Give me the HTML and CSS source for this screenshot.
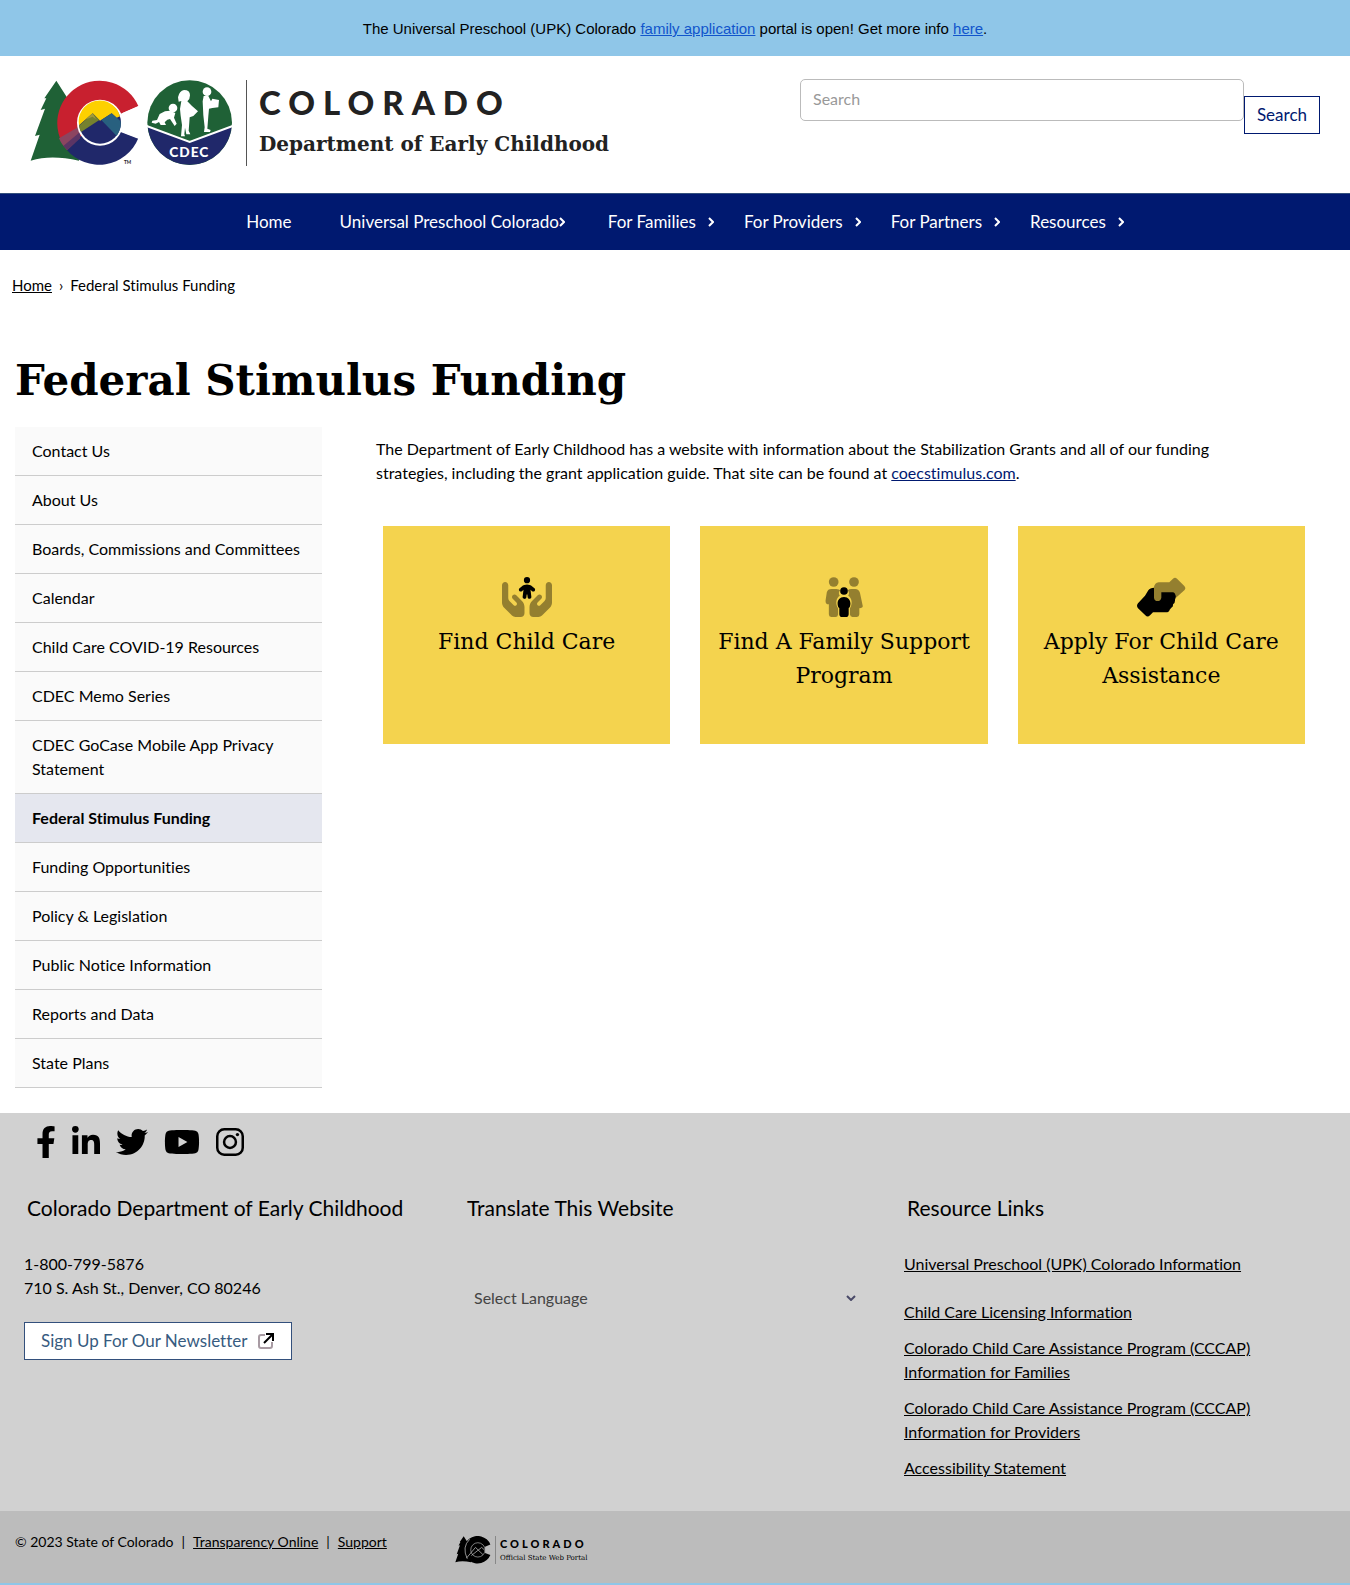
FILE: index.html
```html
<!DOCTYPE html>
<html lang="en">
<head>
<meta charset="utf-8">
<meta name="viewport" content="width=device-width, initial-scale=1">
<title>Federal Stimulus Funding | Colorado Department of Early Childhood</title>
<link rel="stylesheet" href="styles.css">
</head>
<body>
<div class="alert">The Universal Preschool (UPK) Colorado <a href="#">family application</a> portal is open! Get more info <a href="#">here</a>.</div>

<header class="header">
  <a class="brand" href="#">
    <svg class="brand-mark" viewBox="90 60 612 258" aria-hidden="true">
      <path fill="#1f6136" d="M169 62L133 115l6 0-17 35 13-4-30 82 14-4-27 78c45-14 90-12 145 0L230 170 206 120z"/>
      <path fill="#c8202f" d="M415 138A127 127 0 1 0 200 269L300 190 366 160z"/>
      <path fill="#20286a" d="M415 235A127 127 0 0 1 200 269L240 230 300 190 366 216z"/>
      <path fill="#8c4560" d="M177 235L240 198V234L202 270Q184 254 177 235z"/>
      <path fill="#5b3565" d="M190 258L240 216V234L202 270z"/>
      <path fill="#fff" d="M366 160L440 128V246L362 216z"/>
      <circle cx="300" cy="188" r="69" fill="#fff"/>
      <circle cx="300" cy="188" r="63" fill="#20286a"/>
      <path fill="#fdd000" d="M237 196A63 63 0 0 1 360 169L350 173 335 160 300 182 278 160z"/>
      <path fill="#75812f" d="M237 197L278 160 298 180 243 216Q238 206 237 197z"/>
      <path fill="#a49a3a" d="M278 160L258 178 278 170 288 178z"/>
      <path fill="#28607f" d="M304 180L335 160 362 184Q365 205 350 228z"/>
      <text x="372" y="312" class="tm">TM</text>
      <circle cx="569" cy="188" r="127" fill="#1f6136"/>
      <path fill="#20286a" d="M443 199L569 245 695 199A126.500 126.500 0 0 1 443 199z"/>
      <path fill="none" stroke="#fff" stroke-width="6" d="M440 198L569 246 698 198"/>
      <g fill="#fff">
        <circle cx="519" cy="144" r="13"/>
        <path d="M510 152l16 7-4 14 8 18-6 7-14-21-8 2-8 8 4 8h-16l-5-9-10 5-12-3 2-6 14-2 8-18 16-8z"/>
        <path d="M534 112q4-20 18-22 18 0 18 16 0 12-8 18l14 14 18 16-14 14-11 4-1 14-2 26 5 11h-12l-4-20-2 20 2 6h-12l3-34-4-28-2-20 4-24-8 2z"/>
        <circle cx="621" cy="95" r="13"/>
        <path d="M611 108h14l8 16 4-8 20 4-2 22-18 2-10 2-2 22-3 38 10 4-2 6h-18l2-14-4-36-2-42z"/>
      </g>
      <text x="508" y="290" class="cdec">CDEC</text>
    </svg>
    <span class="brand-text">
      <span class="brand-state">COLORADO</span>
      <span class="brand-dept">Department of Early Childhood</span>
    </span>
  </a>
  <form class="search">
    <input class="search-input" type="search" placeholder="Search" aria-label="Search">
    <button class="search-button" type="submit">Search</button>
  </form>
</header>

<nav class="nav" aria-label="Main">
  <ul class="nav-list">
    <li><a href="#">Home</a></li>
    <li class="nav-tight"><a href="#">Universal Preschool Colorado<svg class="chev" viewBox="0 0 6 10"><path d="M1 1l4 4-4 4"/></svg></a></li>
    <li><a href="#">For Families<svg class="chev" viewBox="0 0 6 10"><path d="M1 1l4 4-4 4"/></svg></a></li>
    <li><a href="#">For Providers<svg class="chev" viewBox="0 0 6 10"><path d="M1 1l4 4-4 4"/></svg></a></li>
    <li><a href="#">For Partners<svg class="chev" viewBox="0 0 6 10"><path d="M1 1l4 4-4 4"/></svg></a></li>
    <li><a href="#">Resources<svg class="chev" viewBox="0 0 6 10"><path d="M1 1l4 4-4 4"/></svg></a></li>
  </ul>
</nav>

<main class="main">
  <div class="breadcrumb"><a href="#">Home</a><span>›</span><span>Federal Stimulus Funding</span></div>
  <h1 class="title">Federal Stimulus Funding</h1>
  <div class="columns">
    <ul class="side">
      <li><a href="#">Contact Us</a></li>
      <li><a href="#">About Us</a></li>
      <li><a href="#">Boards, Commissions and Committees</a></li>
      <li><a href="#">Calendar</a></li>
      <li><a href="#">Child Care COVID-19 Resources</a></li>
      <li><a href="#">CDEC Memo Series</a></li>
      <li><a href="#">CDEC GoCase Mobile App Privacy Statement</a></li>
      <li><a class="current" href="#">Federal Stimulus Funding</a></li>
      <li><a href="#">Funding Opportunities</a></li>
      <li><a href="#">Policy &amp; Legislation</a></li>
      <li><a href="#">Public Notice Information</a></li>
      <li><a href="#">Reports and Data</a></li>
      <li><a href="#">State Plans</a></li>
    </ul>
    <div class="content">
      <p class="intro">The Department of Early Childhood has a website with information about the Stabilization Grants and all of our funding strategies, including the grant application guide. That site can be found at <a href="#">coecstimulus.com</a>.</p>
      <div class="cards">
        <a class="card" href="#">
          <svg class="card-icon" viewBox="0 0 640 512"><path d="M320 0a40 40 0 1 1 0 80 40 40 0 1 1 0-80zm44.700 164.300L375.800 253c1.600 13.200-7.700 25.100-20.800 26.800s-25.100-7.700-26.800-20.800l-4.400-35h-7.600l-4.400 35c-1.600 13.200-13.600 22.500-26.800 20.800s-22.500-13.600-20.800-26.800l11.100-88.800L255.500 181c-10.100 8.600-25.300 7.300-33.800-2.800s-7.300-25.300 2.800-33.800l27.900-23.600C271.300 104.800 295.300 96 320 96s48.700 8.800 67.600 24.700l27.900 23.600c10.100 8.600 11.400 23.700 2.800 33.800s-23.700 11.400-33.800 2.800l-19.800-16.700z"/><path class="soft" d="M40 64c22.100 0 40 17.900 40 40v160.200c0 17 6.700 33.300 18.700 45.300l51.100 51.100c8.300 8.300 21.300 9.600 31 3.100 12.900-8.600 14.700-26.900 3.700-37.800l-47.200-47.200c-12.500-12.500-12.500-32.800 0-45.300s32.800-12.500 45.300 0l72.500 72.500c21 21 32.800 49.500 32.800 79.200V464c0 26.500-21.500 48-48 48h-66.700c-17 0-33.300-6.700-45.300-18.700L28.100 393.400C10.100 375.400 0 351 0 325.500V104c0-22.100 17.900-40 40-40zm560 0c22.100 0 40 17.900 40 40v221.500c0 25.500-10.100 49.900-28.100 67.900L512 493.300c-12 12-28.300 18.700-45.300 18.700H400c-26.500 0-48-21.500-48-48v-78.900c0-29.700 11.800-58.200 32.800-79.200l72.500-72.500c12.500-12.500 32.800-12.500 45.300 0s12.500 32.800 0 45.300l-47.200 47.200c-11 11-9.200 29.200 3.700 37.800 9.700 6.500 22.700 5.200 31-3.100l51.100-51.100c12-12 18.700-28.300 18.700-45.300V104c0-22.100 17.900-40 40-40z"/></svg>
          <span>Find Child Care</span>
        </a>
        <a class="card" href="#">
          <svg class="card-icon" viewBox="-64 0 640 512"><g class="soft"><circle cx="124" cy="64" r="62"/><circle cx="384" cy="64" r="62"/><path d="M96 152H160Q196 154 208 170 176 200 202 240C150 270 146 350 180 400V480Q176 512 148 512H92Q62 508 62 476V350Q16 350 20 300L36 196Q46 152 96 152z"/><path d="M352 152H400Q446 154 460 200L496 372Q498 398 452 400V476Q450 508 420 512H364Q336 508 332 480V400C366 350 362 270 310 240 336 200 306 180 304 170Q320 152 352 152z"/></g><circle cx="256" cy="179" r="49"/><path d="M256 256C310 256 338 296 338 340 338 370 330 390 316 398V476Q312 512 284 512H228Q200 512 196 476V398C182 390 174 370 174 340 174 296 202 256 256 256z"/></svg>
          <span>Find A Family Support Program</span>
        </a>
        <a class="card" href="#">
          <svg class="card-icon" viewBox="828 170 150 120"><path d="M882 202Q870 202 865 210L855 226 834 249Q828 256 834 264L856 285Q863 292 870 285L879 276H918Q927 276 929 268L934 262Q940 260 939 252 946 248 945 238L949 226 945 212H900z"/><path class="soft" d="M882 232V200Q884 188 896 186H928L939 175Q945 169 951 175L973 197Q979 204 973 210L948 232Q946 216 938 216H904V232Q902 242 893 242 883 242 882 232z"/></svg>
          <span>Apply For Child Care Assistance</span>
        </a>
      </div>
    </div>
  </div>
</main>

<footer class="footer">
  <div class="social">
    <a href="#" aria-label="Facebook"><svg viewBox="0 0 320 512"><path d="M279.140 288l14.220-92.660h-88.910v-60.130c0-25.350 12.420-50.060 52.240-50.060h40.420V6.260S260.430 0 225.360 0c-73.220 0-121.080 44.380-121.080 124.720v70.620H22.890V288h81.390v224h100.170V288z"/></svg></a>
    <a href="#" aria-label="LinkedIn"><svg viewBox="0 0 448 512"><path d="M100.280 448H7.400V148.900h92.880zM53.790 108.100C24.090 108.100 0 83.500 0 53.800a53.790 53.790 0 0 1 107.580 0c0 29.700-24.100 54.300-53.790 54.300zM447.900 448h-92.680V302.400c0-34.700-.7-79.200-48.290-79.200-48.290 0-55.690 37.700-55.690 76.700V448h-92.780V148.900h89.080v40.800h1.300c12.400-23.500 42.690-48.300 87.880-48.300 94 0 111.280 61.900 111.280 142.300V448z"/></svg></a>
    <a href="#" aria-label="Twitter"><svg viewBox="0 0 512 512"><path d="M459.370 151.716c.325 4.548.325 9.097.325 13.645 0 138.720-105.583 298.558-298.558 298.558-59.452 0-114.680-17.219-161.137-47.106 8.447.974 16.568 1.299 25.340 1.299 49.055 0 94.213-16.568 130.274-44.832-46.132-.975-84.792-31.188-98.112-72.772 6.498.974 12.995 1.624 19.818 1.624 9.421 0 18.843-1.300 27.614-3.573-48.081-9.747-84.143-51.980-84.143-102.985v-1.299c13.969 7.797 30.214 12.670 47.431 13.319-28.264-18.843-46.781-51.005-46.781-87.391 0-19.492 5.197-37.360 14.294-52.954 51.655 63.675 129.300 105.258 216.365 109.807-1.624-7.797-2.599-15.918-2.599-24.040 0-57.828 46.782-104.934 104.934-104.934 30.213 0 57.502 12.670 76.670 33.137 23.715-4.548 46.456-13.320 66.599-25.340-7.798 24.366-24.366 44.833-46.132 57.827 21.117-2.273 41.584-8.122 60.426-16.243-14.292 20.791-32.161 39.308-52.628 54.253z"/></svg></a>
    <a href="#" aria-label="YouTube"><svg viewBox="0 0 576 512"><path d="M549.655 124.083c-6.281-23.650-24.787-42.276-48.284-48.597C458.781 64 288 64 288 64S117.220 64 74.629 75.486c-23.497 6.322-42.003 24.947-48.284 48.597-11.412 42.867-11.412 132.305-11.412 132.305s0 89.438 11.412 132.305c6.281 23.650 24.787 41.500 48.284 47.821C117.220 448 288 448 288 448s170.780 0 213.371-11.486c23.497-6.321 42.003-24.171 48.284-47.821 11.412-42.867 11.412-132.305 11.412-132.305s0-89.438-11.412-132.305zm-317.510 213.508V175.185l142.739 81.205-142.739 81.201z"/></svg></a>
    <a href="#" aria-label="Instagram"><svg viewBox="0 0 448 512"><rect x="20" y="52" width="408" height="408" rx="112" fill="none" stroke="#000" stroke-width="40"/><circle cx="224" cy="256" r="95" fill="none" stroke="#000" stroke-width="40"/><circle cx="343" cy="137" r="27"/></svg></a>
  </div>
  <div class="footer-cols">
    <section class="footer-col">
      <h2>Colorado Department of Early Childhood</h2>
      <p>1-800-799-5876<br>710 S. Ash St., Denver, CO 80246</p>
      <a class="newsletter" href="#">Sign Up For Our Newsletter
        <svg viewBox="0 0 18 18"><path d="M8 3H4Q2 3 2 5v9q0 2 2 2h9q2 0 2-2v-4" fill="none" stroke="#a89ba3" stroke-width="2"/><path d="M7 11l8-8M9 2h7v7" fill="none" stroke="#000" stroke-width="2"/></svg>
      </a>
    </section>
    <section class="footer-col">
      <h2>Translate This Website</h2>
      <div class="translate">
        <select class="language" aria-label="Select Language"><option>Select Language</option></select>
        <svg class="language-arrow" viewBox="0 0 10 6"><path d="M1 1l4 4 4-4"/></svg>
      </div>
    </section>
    <section class="footer-col">
      <h2>Resource Links</h2>
      <ul class="links">
        <li class="links-lead"><a href="#">Universal Preschool (UPK) Colorado Information</a></li>
        <li><a href="#">Child Care Licensing Information</a></li>
        <li><a href="#">Colorado Child Care Assistance Program (CCCAP) Information for Families</a></li>
        <li><a href="#">Colorado Child Care Assistance Program (CCCAP) Information for Providers</a></li>
        <li><a href="#">Accessibility Statement</a></li>
      </ul>
    </section>
  </div>
</footer>

<div class="legal">
  <div class="legal-text"><span>© 2023 State of Colorado</span><span>|</span><a href="#">Transparency Online</a><span>|</span><a href="#">Support</a></div>
  <a class="portal" href="#">
    <svg class="portal-mark" viewBox="90 60 330 258" aria-hidden="true">
      <path d="M169 62L133 115l6 0-17 35 13-4-30 82 14-4-27 78c45-14 90-12 145 0L230 170 206 120z"/>
      <path d="M415 138A127 127 0 1 0 415 235L366 216V160z"/>
      <circle cx="300" cy="188" r="66" stroke="#bcbcbc" stroke-width="6"/>
      <path fill="none" stroke="#bcbcbc" stroke-width="7" d="M196 262L278 165 345 230M240 240L335 165 362 190M225 90Q150 160 202 270"/>
    </svg>
    <span class="portal-text"><b>COLORADO</b><span>Official State Web Portal</span></span>
  </a>
</div>
</body>
</html>
```
FILE: styles.css
```css
* { box-sizing: border-box; }
body { margin: 0; background: #8fc6e8; color: #000; font: 16px/24px Lato, "Noto Sans", sans-serif; font-variant-ligatures: none; }
ul { list-style: none; margin: 0; padding: 0; }
a { color: inherit; }

.alert { padding: 18px 16px 16px; text-align: center; font: 15px/22px "Liberation Sans", Arial, sans-serif; background: #8fc6e8; }
.alert a { color: #1155cc; }

.header { display: flex; justify-content: space-between; align-items: flex-start; gap: 40px; padding: 23px 30px 27px; background: #fff; }
.brand { display: flex; gap: 12px; padding-top: 1px; color: #222; text-decoration: none; }
.brand-mark { width: 204px; height: 86px; }
.tm { font: 700 14px Lato, sans-serif; fill: #222; }
.cdec { font: 900 41px Lato, sans-serif; fill: #fff; letter-spacing: 3px; }
.brand-text { display: flex; flex-direction: column; padding: 4px 0 0 12px; border-left: 1px solid #555; white-space: nowrap; }
.brand-state { font: 900 33px/36px Lato, sans-serif; letter-spacing: 8px; }
.brand-dept { margin-top: 8px; font: 700 20px/32px "DejaVu Serif", serif; }
.search { display: flex; flex: 0 1 520px; }
.search-input { flex: 1; min-width: 0; height: 42px; padding: 0 12px 4px; border: 1px solid #bbb; border-radius: 5px; background: #fff; font: 16px/24px Lato, sans-serif; }
.search-input::placeholder { color: #999; }
.search-button { height: 38px; margin-top: 17px; padding: 0 12px; border: 1px solid #001970; background: #fff; color: #001970; font: 17px/24px Lato, sans-serif; }

.nav { padding: 16px 0 16px 20px; background: #001970; border-top: 1px solid #33507c; }
.nav-list { display: flex; flex-wrap: wrap; justify-content: center; gap: 0 30px; color: #fff; font-size: 17px; }
.nav-list li:first-child { padding-right: 18px; }
.nav-list a { display: flex; align-items: center; gap: 12px; text-decoration: none; }
.nav-list .nav-tight { padding-right: 13px; }
.nav-tight a { gap: 0; }
.chev { width: 6px; height: 10px; fill: none; stroke: #fff; stroke-width: 2; }

.main { padding: 23px 15px 25px; background: #fff; }
.breadcrumb { display: flex; gap: 7px; margin-left: -3px; font-size: 15px; }
.title { margin: 54px 0 16px; font: 700 42px/60px "DejaVu Serif", serif; }
.columns { display: grid; grid-template-columns: 307px 1fr; gap: 54px; align-items: start; }
.side a { display: block; padding: 12px 17px; background: #fafafa; border-bottom: 1px solid #ccc; text-decoration: none; }
.side .current { background: #e5e7ef; font-weight: 700; }
.content { padding-right: 30px; }
.intro { margin: 10px 40px 41px 0; }
.intro a { color: #001970; }
.cards { display: grid; grid-template-columns: repeat(3, 1fr); gap: 30px; padding-left: 7px; }
.card { display: flex; flex-direction: column; align-items: center; gap: 8px; min-height: 218px; padding: 51px 12px 40px; background: #f4d34e; text-align: center; text-decoration: none; font: 22px/34px "DejaVu Serif", serif; }
.card-icon { width: 50px; height: 40px; }
.soft { fill: #947f2f; }

.footer { padding: 13px 16px 31px 14px; background: #d1d1d1; }
.social { display: flex; gap: 16px; padding-left: 22px; }
.social svg { display: block; height: 32px; }
.footer-cols { display: grid; grid-template-columns: repeat(3, 1fr); margin-top: 35px; }
.footer-col { padding: 0 10px; }
.footer-col h2 { margin: 0 0 29px 3px; font: 21px/30px Lato, sans-serif; }
.footer-col p { margin: 0 0 22px; }
.newsletter { display: inline-flex; align-items: center; gap: 10px; padding: 6px 16px; border: 1px solid #33507c; background: #fff; color: #375b80; font-size: 17px; text-decoration: none; }
.newsletter svg { width: 18px; height: 18px; }
.translate { display: flex; align-items: center; padding: 28px 28px 0 10px; }
.language { flex: 1; height: 36px; padding: 0; border: 0; appearance: none; background: none; color: #444; font: 16px/24px Lato, sans-serif; }
.language-arrow { width: 10px; height: 6px; fill: none; stroke: #4a4a68; stroke-width: 2; }
.links { display: grid; gap: 12px; max-width: 360px; }
.links-lead { margin-bottom: 12px; }

.legal { display: grid; grid-template-columns: 440px 1fr; align-items: start; padding: 19px 15px 19px; background: #bcbcbc; font-size: 14px; }
.legal-text { display: flex; gap: 8px; }
.portal { display: flex; gap: 4px; padding-top: 6px; text-decoration: none; }
.portal-mark { width: 36px; height: 28px; }
.portal-text { display: flex; flex-direction: column; padding-left: 4px; border-left: 1px solid #888; font: 7px/12px "DejaVu Serif", serif; }
.portal-text b { font: 900 11px/16px Lato, sans-serif; letter-spacing: 3px; }
```
